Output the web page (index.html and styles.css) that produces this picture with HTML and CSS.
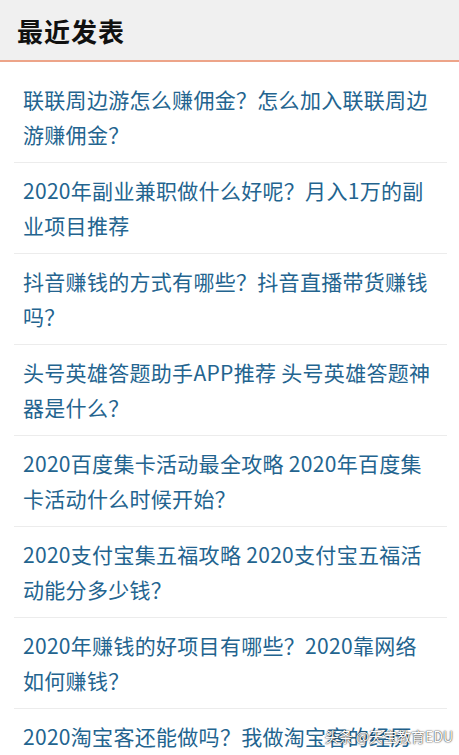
FILE: index.html
```html
<!DOCTYPE html>
<html lang="zh-CN">
<head>
<meta charset="utf-8">
<title>最近发表</title>
<link rel="stylesheet" href="styles.css">
</head>
<body>
<div class="panel">
  <div class="panel-head"><h2 class="panel-title">最近发表</h2></div>
  <ul class="post-list">
    <li class="post-item"><a class="post-link" href="#">联联周边游怎么赚佣金？怎么加入联联周边游赚佣金？</a></li>
    <li class="post-item"><a class="post-link" href="#">2020年副业兼职做什么好呢？月入1万的副业项目推荐</a></li>
    <li class="post-item"><a class="post-link" href="#">抖音赚钱的方式有哪些？抖音直播带货赚钱吗？</a></li>
    <li class="post-item"><a class="post-link" href="#">头号英雄答题助手APP推荐 头号英雄答题神器是什么？</a></li>
    <li class="post-item"><a class="post-link" href="#">2020百度集卡活动最全攻略 2020年百度集卡活动什么时候开始？</a></li>
    <li class="post-item"><a class="post-link" href="#">2020支付宝集五福攻略 2020支付宝五福活动能分多少钱？</a></li>
    <li class="post-item"><a class="post-link" href="#">2020年赚钱的好项目有哪些？2020靠网络如何赚钱？</a></li>
    <li class="post-item"><a class="post-link" href="#">2020淘宝客还能做吗？我做淘宝客的经历</a></li>
  </ul>
</div>
<div class="watermark">头条 @天宝教育EDU</div>
</body>
</html>
```
FILE: styles.css
```css
html, body {
  margin: 0;
  padding: 0;
  background: #ffffff;
  overflow: hidden;
}
body {
  width: 459px;
  height: 755px;
  position: relative;
  font-family: "Noto Sans CJK SC", "Microsoft YaHei", sans-serif;
}
.panel {
  display: flex;
  flex-direction: column;
}
.panel-head {
  height: 60px;
  background: #f0f0f0;
  border-bottom: 2px solid #eda489;
  display: flex;
  align-items: center;
  padding-left: 17px;
}
.panel-title {
  margin: 0;
  font-size: 26px;
  font-weight: 700;
  color: #111111;
  letter-spacing: 1px;
}
.post-list {
  list-style: none;
  margin: 0;
  padding: 10px 12px 0 14px;
}
.post-item {
  padding: 10px 9px 10px 9px;
  border-bottom: 1px solid #ececec;
}
.post-link {
  display: block;
  color: #23648f;
  text-decoration: none;
  font-size: 21px;
  line-height: 35px;
  letter-spacing: 0.3px;
}
.watermark {
  position: absolute;
  right: 6px;
  bottom: 9px;
  font-size: 14px;
  color: #ffffff;
  text-shadow: 0 0 2px rgba(0,0,0,0.7), 0 0 1px rgba(0,0,0,0.8);
}
```
